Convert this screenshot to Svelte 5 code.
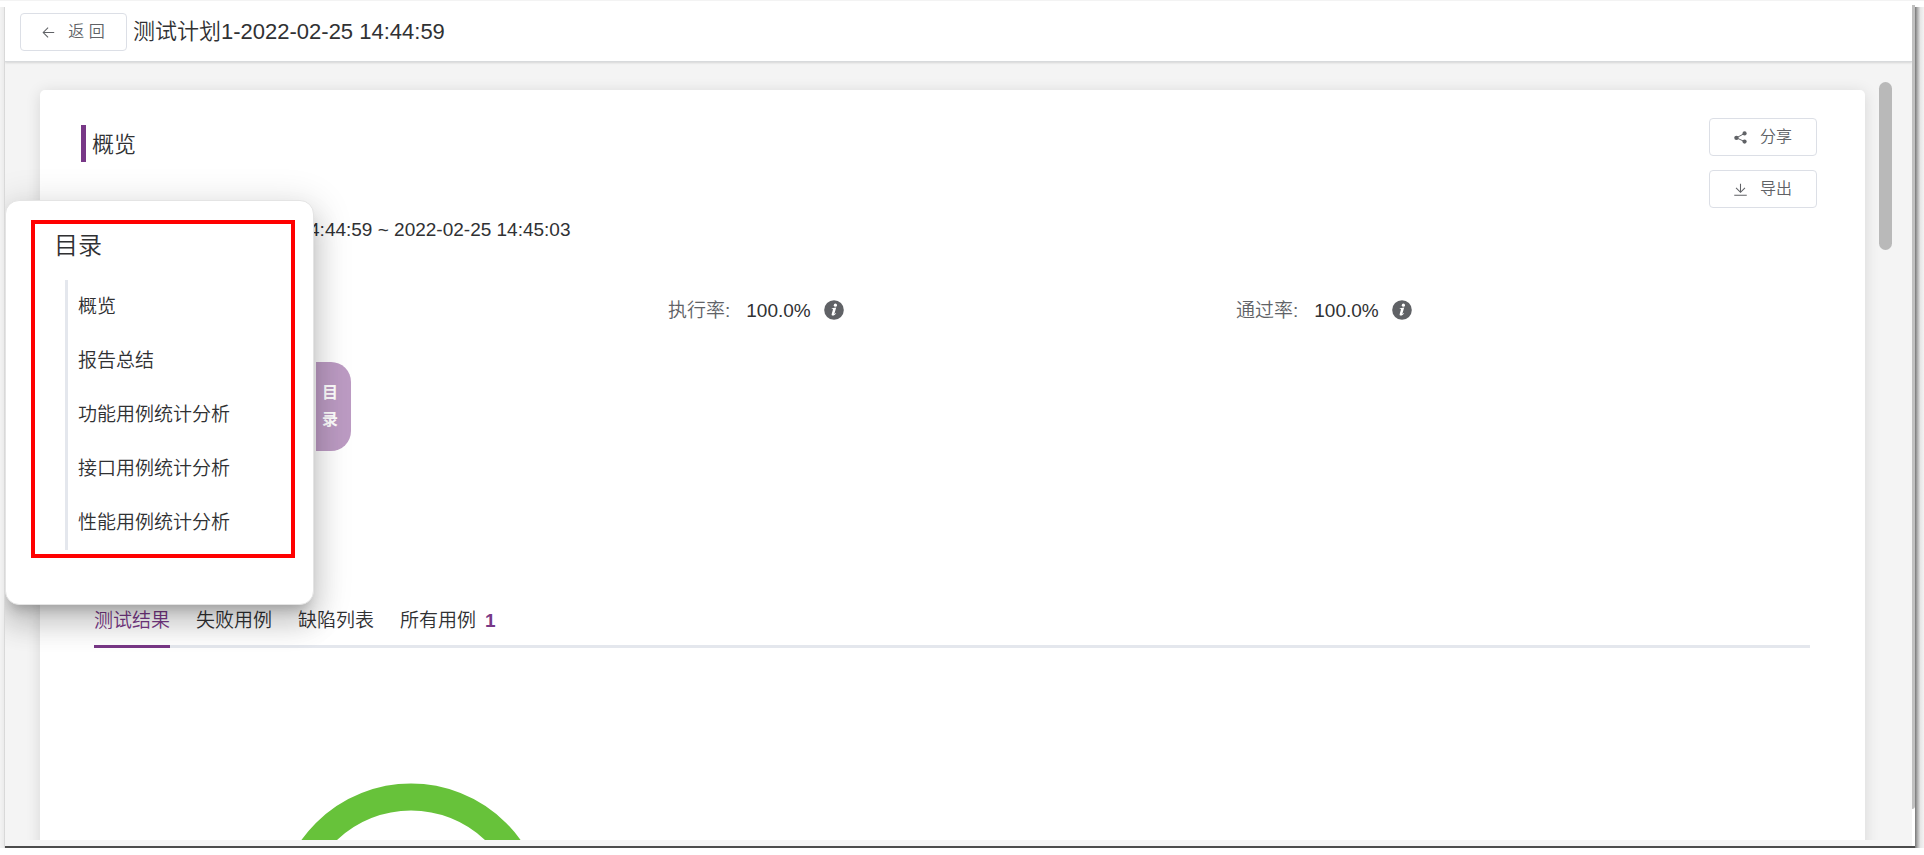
<script>
  const sections = ['概览', '报告总结', '功能用例统计分析', '接口用例统计分析', '性能用例统计分析'];
  const tabs = [
    { label: '测试结果' },
    { label: '失败用例' },
    { label: '缺陷列表' },
    { label: '所有用例', count: 1 }
  ];
  const rates = [
    { label: '执行率:', value: '100.0%' },
    { label: '通过率:', value: '100.0%' }
  ];
  let active = $state(0);
</script>

<div class="page">
  <div class="gutter left"></div>
  <div class="window">
    <div class="frame">
      <header>
        <button class="btn back">
          <svg class="icon" viewBox="0 0 16 16" fill="none" stroke="currentColor" stroke-width="1.3"><path d="M15 8H1.500M7.500 2L1.500 8l6 6" /></svg>
          <span>返 回</span>
        </button>
        <h1>测试计划1-2022-02-25 14:44:59</h1>
      </header>

      <div class="body">
        <main class="scroll">
          <section class="card">
            <div class="top">
              <h2>概览</h2>
              <div class="actions">
                <button class="btn">
                  <svg class="icon" viewBox="0 0 16 16"><path d="M3 8.4L13 3M3 8.400L13 13" stroke="currentColor" stroke-width="1.2" /><g fill="currentColor"><circle cx="3" cy="8.4" r="2.7" /><circle cx="13" cy="3" r="2.6" /><circle cx="13" cy="13" r="2.6" /></g></svg>
                  <span>分享</span>
                </button>
                <button class="btn">
                  <svg class="icon" viewBox="0 0 16 16" fill="none" stroke="currentColor" stroke-width="1.3"><path d="M8 .8v10.400M2.500 6L8 11.500 13.500 6M.3 15h15.400" /></svg>
                  <span>导出</span>
                </button>
              </div>
            </div>

            <p class="time">2022-02-25 14:44:59 ~ 2022-02-25 14:45:03</p>

            <div class="rates">
              <div></div>
              {#each rates as rate}
                <div class="rate">
                  <span class="label">{rate.label}</span>
                  <span class="value">{rate.value}</span>
                  <svg class="info" viewBox="0 0 20 20"><circle cx="10" cy="10" r="9.8" fill="#606266" /><g fill="#fff"><circle cx="11.4" cy="5.2" r="1.6" /><path d="M7.700 8.200l4.500-.6-1.800 6.100c-.1.5.3.5 1.400-.7l.4.3c-1.200 1.700-2.200 2.300-3.300 2.300-1 0-1.500-.7-1.200-1.700l1.200-4.200c.2-.8 0-.9-1.200-.9z" /></g></svg>
                </div>
              {/each}
            </div>

            <div class="tabs" role="tablist">
              {#each tabs as tab, i}
                <button role="tab" class="tab" class:active={active === i} aria-selected={active === i} onclick={() => (active = i)}>
                  {tab.label}{#if tab.count}<b>{tab.count}</b>{/if}
                </button>
              {/each}
            </div>

            <div class="chart">
              <svg viewBox="0 0 270 270" width="270" height="270"><circle cx="135" cy="135" r="121" fill="none" stroke="#67c23a" stroke-width="27" /></svg>
            </div>
          </section>
        </main>
        <div class="thumb"></div>
      </div>

      <button class="handle"><span>目</span><span>录</span></button>
      <aside class="drawer">
        <nav>
          <h3>目录</h3>
          <ul>
            {#each sections as section}
              <li><a href="#top">{section}</a></li>
            {/each}
          </ul>
        </nav>
      </aside>
    </div>
    <div class="edge"></div>
  </div>
  <div class="gutter right"></div>
</div>

<style>
  :global(body) {
    background: #fff;
  }
  * {
    box-sizing: border-box;
  }
  h1,
  h2,
  h3,
  p,
  ul {
    margin: 0;
    padding: 0;
    font-weight: inherit;
  }
  button {
    font: inherit;
    margin: 0;
    cursor: pointer;
  }
  .page {
    height: 100vh;
    padding-bottom: 7px;
    display: flex;
    overflow: hidden;
    font-family: 'Liberation Sans', 'Noto Sans CJK SC', sans-serif;
    font-size: 19px;
    font-weight: 350;
    color: #303133;
    border-top: 1px solid #f3f3f3;
  }
  .gutter {
    margin-top: 6px;
    flex: none;
  }
  .left {
    width: 5px;
    background: linear-gradient(to right, #f3f3f3, #ececec 70%, #cfcfcf);
  }
  .right {
    width: 9px;
    background: linear-gradient(to right, #777, #b4b4b4 30%, #e6e6e6 60%, #f3f3f3);
  }
  .window {
    flex: 1;
    min-width: 0;
    display: flex;
    border-bottom: 2px solid #4c4c4c;
  }
  .edge {
    flex: none;
    width: 3px;
    margin: 4px 0 37px;
    background: #c0c0c0;
    border-radius: 0 0 3px 0;
  }
  .frame {
    position: relative;
    flex: 1;
    min-width: 0;
    display: flex;
    flex-direction: column;
    overflow: hidden;
  }
  header {
    position: relative;
    z-index: 1;
    height: 61px;
    flex: none;
    display: flex;
    align-items: center;
    gap: 6px;
    padding: 2px 15px 0;
    background: #fff;
    border-bottom: 1px solid #d8dadc;
    box-shadow: 0 1px 2px rgba(0, 0, 0, 0.12);
  }
  h1,
  h2 {
    font-size: 22px;
    line-height: 36px;
  }
  .btn {
    height: 38px;
    width: 108px;
    display: flex;
    align-items: center;
    justify-content: center;
    gap: 13px;
    padding: 0;
    border: 1px solid #dcdfe6;
    border-radius: 4px;
    background: #fff;
    color: #606266;
    font-size: 16px;
    line-height: 16px;
  }
  .btn.back {
    width: 107px;
  }
  .icon {
    width: 13px;
    height: 13px;
  }
  .body {
    position: relative;
    flex: 1;
    min-height: 0;
    background: #f4f4f4;
    padding-bottom: 6px;
  }
  .scroll {
    height: 100%;
    overflow: hidden;
    padding: 28px 47px 0 35px;
  }
  .card {
    padding: 28px 48px 0 41px;
    background: #fff;
    border-radius: 5px;
    box-shadow: 0 2px 15px rgba(0, 0, 0, 0.12);
  }
  .top {
    display: flex;
    justify-content: space-between;
    align-items: flex-start;
  }
  h2 {
    margin-top: 7px;
    padding-left: 6px;
    border-left: 5px solid #783887;
    height: 37px;
    line-height: 39px;
  }
  .actions {
    display: flex;
    flex-direction: column;
    gap: 14px;
  }
  .time {
    margin-top: 8px;
    padding-left: 115px;
    line-height: 28px;
  }
  .rates {
    display: grid;
    grid-template-columns: repeat(3, 1fr);
    margin-top: 52px;
    padding: 0 13px 0 19px;
  }
  .rate {
    display: flex;
    align-items: center;
    line-height: 30px;
  }
  .label {
    color: #606266;
    margin-right: 16px;
  }
  .value {
    margin-right: 13px;
  }
  .info {
    width: 20px;
    height: 20px;
    margin-bottom: 2px;
  }
  .tabs {
    display: flex;
    gap: 26px;
    margin: 270px 7px 0 13px;
    border-bottom: 3px solid #e4e7ed;
  }
  .tab {
    height: 52px;
    margin-bottom: -3px;
    padding: 0;
    border: 0;
    border-bottom: 3px solid transparent;
    background: none;
    color: #303133;
    line-height: 45px;
  }
  .tab.active {
    color: #783887;
    border-color: #783887;
  }
  .tab b {
    margin-left: 9px;
    color: #783887;
    font-weight: 700;
  }
  .chart {
    padding: 135px 0 0 195px;
  }
  .chart svg {
    display: block;
  }
  .thumb {
    position: absolute;
    right: 20px;
    top: 20px;
    width: 13px;
    height: 168px;
    border-radius: 7px;
    background: #b9b9b9;
  }
  .handle {
    position: absolute;
    left: 311px;
    top: 361px;
    width: 35px;
    height: 89px;
    display: flex;
    flex-direction: column;
    align-items: flex-start;
    padding: 17px 6px;
    border: 0;
    border-radius: 0 20px 20px 0;
    background: #bc9bc3;
    color: #fff;
    font-size: 16px;
    font-weight: 700;
    line-height: 27px;
  }
  .drawer {
    position: absolute;
    left: 0;
    top: 199px;
    width: 309px;
    height: 405px;
    padding: 19px 18px 0 25px;
    background: #fff;
    border: 1px solid #e4e4e4;
    border-radius: 14px;
    box-shadow:
      0 10px 12px -6px rgba(0, 0, 0, 0.2),
      0 19px 29px 2px rgba(0, 0, 0, 0.14),
      0 7px 36px 6px rgba(0, 0, 0, 0.12);
  }
  nav {
    height: 338px;
    padding: 4px 19px;
    border: 4px solid #f00;
  }
  h3 {
    font-size: 24px;
    line-height: 36px;
  }
  ul {
    list-style: none;
    margin: 16px 0 0 11px;
    padding-left: 10px;
    border-left: 3px solid #e4e7ed;
  }
  li {
    line-height: 54px;
    height: 54px;
  }
  a {
    color: inherit;
    text-decoration: none;
  }
</style>
